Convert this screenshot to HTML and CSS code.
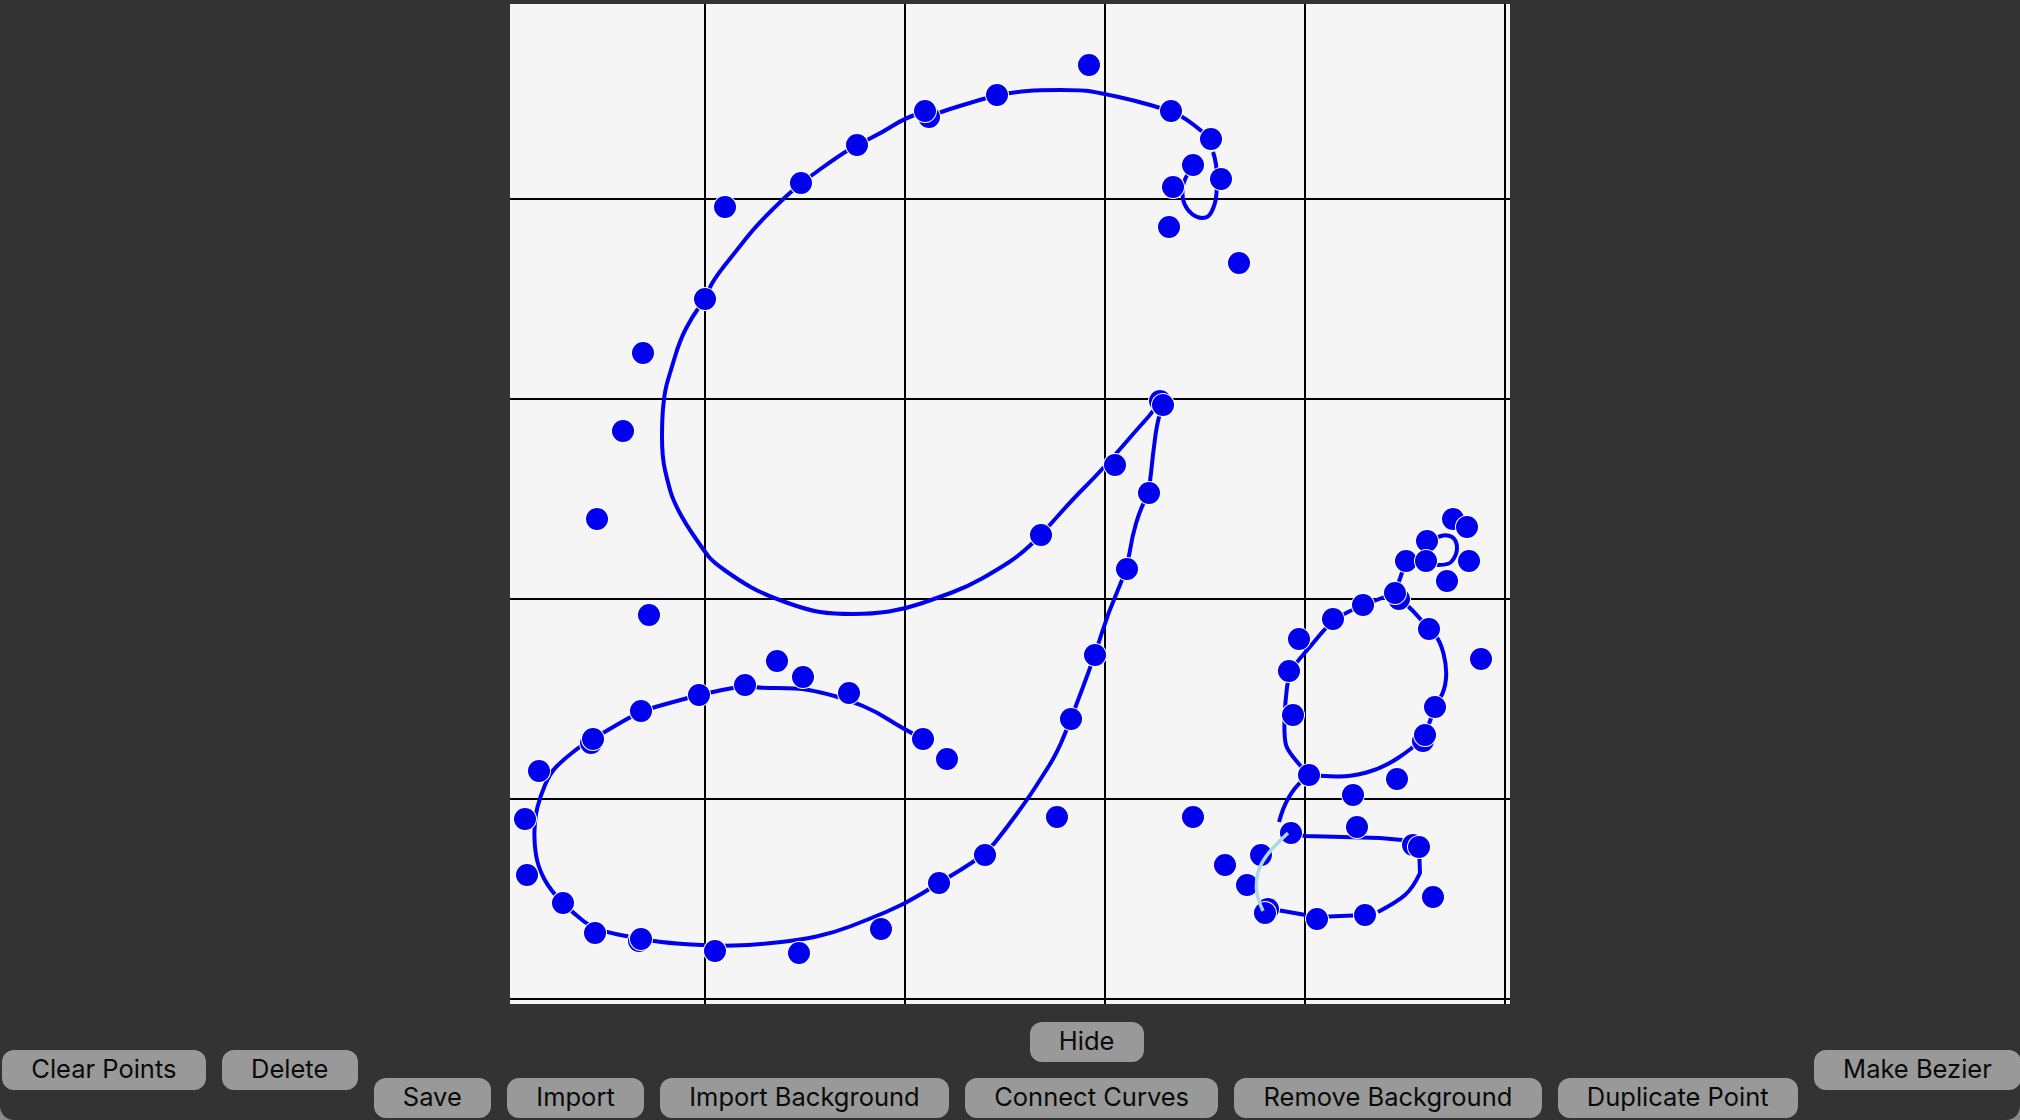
FILE: index.html
```html
<!DOCTYPE html>
<html lang="en">
<head>
  <meta charset="UTF-8" />
  <meta name="viewport" content="width=device-width, initial-scale=1.0"/>
  <title>Curve Editor</title>
  <link rel="stylesheet" href="styles.css">
</head>
<body>
  <div class="app">
    <svg class="board" viewBox="510 4 1000 1000" width="1000" height="1000">
      <rect class="paper" x="510" y="4" width="1000" height="1000"/>

      <!-- grid -->
      <g class="grid">
        <line x1="705" y1="4" x2="705" y2="1004"/>
        <line x1="905" y1="4" x2="905" y2="1004"/>
        <line x1="1105" y1="4" x2="1105" y2="1004"/>
        <line x1="1305" y1="4" x2="1305" y2="1004"/>
        <line x1="1505" y1="4" x2="1505" y2="1004"/>
        <line x1="510" y1="199" x2="1510" y2="199"/>
        <line x1="510" y1="399" x2="1510" y2="399"/>
        <line x1="510" y1="599" x2="1510" y2="599"/>
        <line x1="510" y1="799" x2="1510" y2="799"/>
        <line x1="510" y1="999" x2="1510" y2="999"/>
      </g>

      <!-- curves -->
      <g class="curves">
        <path d="M1160,401 Q1152,413 1146,419.5 Q1140,426 1127.5,440.5 Q1115,455 1105,466 Q1095,477 1083.5,488.5 Q1072,500 1056.5,517.5 Q1041,535 1030.5,545 Q1020,555 1008.5,562.5 Q997,570 982,578.5 Q967,587 952,592.5 Q937,598 921,603.5 Q905,609 889,611.5 Q873,614 853,614 Q833,614 820,612 Q807,610 785,602 Q763,594 751.5,587.5 Q740,581 726.5,571.5 Q713,562 709,557 Q705,552 695,537.5 Q685,523 679,511.5 Q673,500 670.5,491.5 Q668,483 665,470 Q662,457 662,437 Q662,417 663.5,403.5 Q665,390 667.5,381.5 Q670,373 675,356.5 Q680,340 686,328.5 Q692,317 698.5,308 Q705,299 709,289.5 Q713,280 725,265 Q737,250 746,238.5 Q755,227 768.5,213.5 Q782,200 791.5,191.5 Q801,183 820.5,169 Q840,155 848.5,150 Q857,145 870,138.5 Q883,132 894,125 Q905,118 925,111"/>
        <path d="M929,117 Q940,112 956.5,107 Q973,102 985,98.5 Q997,95 1007,93.5 Q1017,92 1027.5,91 Q1038,90 1060.5,90 Q1083,90 1091.5,91.5 Q1100,93 1116.5,96.5 Q1133,100 1152,105.5 Q1171,111 1180.5,116 Q1190,121 1211,139"/>
        <path d="M1213,152 Q1217,163 1217,180 Q1217,197 1214.5,204.5 Q1212,212 1209.5,215 Q1207,218 1202,218 Q1197,218 1192,214 Q1187,210 1184.5,204 Q1182,198 1182.5,189 Q1183,180 1193,165"/>
        <path d="M1163,405 Q1158,417 1155.5,435 Q1153,453 1151,473 Q1149,493 1144.5,501.5 Q1140,510 1136,523.5 Q1132,537 1129.5,553 Q1127,569 1117.5,591 Q1108,613 1101.5,634 Q1095,655 1083,687 Q1071,719 1064,736 Q1057,753 1049.5,765 Q1042,777 1034.5,788.5 Q1027,800 1016,815 Q1005,830 995,842.5 Q985,855 962,869 Q939,883 922,893.5 Q905,904 886,912 Q867,920 850,926.5 Q833,933 816.5,936.5 Q800,940 776.5,942.5 Q753,945 734,945.5 Q715,946 691,944.5 Q667,943 654,941 Q641,939 618,934.5 Q595,930 584,921.5 Q573,913 561.5,901.5 Q550,890 544,878.5 Q538,867 536,855 Q534,843 534.5,830 Q535,817 537.5,807 Q540,797 545,785 Q550,773 556.5,766.5 Q563,760 572.5,752.5 Q582,745 587.5,742 Q593,739 603,733 Q613,727 627,719 Q641,711 657,706.5 Q673,702 686,698.5 Q699,695 722,690 Q745,685 751,686.5 Q757,688 777,688 Q797,688 808.5,690 Q820,692 834.5,696 Q849,700 863,706 Q877,712 888.5,719.5 Q900,727 923,739"/>
        <path d="M1399,599 Q1408,605 1418.5,617 Q1429,629 1434.5,634.5 Q1440,640 1443.5,653.5 Q1447,667 1446,678.5 Q1445,690 1440,698.5 Q1435,707 1430,721 Q1425,735 1419,741.5 Q1413,748 1398,758 Q1383,768 1366.5,772.5 Q1350,777 1336.5,776.5 Q1323,776 1316,775.5 Q1309,775 1302,781 Q1295,787 1289,797 Q1283,807 1279,822"/>
        <path d="M1406,561 L1395,593 Q1363,605 1348,612 Q1333,619 1321.5,633 Q1310,647 1299.5,659 Q1289,671 1287,687 Q1285,703 1284.5,720 Q1284,737 1286,745 Q1288,753 1309,775"/>
        <path d="M1426,564 Q1448,567 1452,561 Q1457,555 1457,548 Q1457,540 1452,537 Q1447,534 1441,536 Q1435,538 1427,541"/>
        <path d="M1291,833 L1305,836 L1380,838 L1413,841 L1419,847 L1420,873 Q1413,888 1405,895 Q1397,902 1378,912"/>
        <path d="M1365,915 L1317,917 L1283,911 L1267,909"/>
      </g>

      <!-- points -->
      <g class="points">
        <circle cx="929" cy="117" r="11"/><circle cx="1160" cy="401" r="11"/><circle cx="591" cy="743" r="11"/>
        <circle cx="639" cy="941" r="11"/><circle cx="1268" cy="909" r="11"/><circle cx="1413" cy="845" r="11"/>
        <circle cx="1423" cy="741" r="11"/><circle cx="1399" cy="599" r="11"/>
        <circle cx="725" cy="207" r="11"/><circle cx="925" cy="111" r="11"/><circle cx="857" cy="145" r="11"/>
        <circle cx="801" cy="183" r="11"/><circle cx="705" cy="299" r="11"/><circle cx="643" cy="353" r="11"/>
        <circle cx="623" cy="431" r="11"/><circle cx="597" cy="519" r="11"/><circle cx="997" cy="95" r="11"/>
        <circle cx="1089" cy="65" r="11"/><circle cx="1171" cy="111" r="11"/><circle cx="1211" cy="139" r="11"/>
        <circle cx="1193" cy="165" r="11"/><circle cx="1173" cy="187" r="11"/><circle cx="1221" cy="179" r="11"/>
        <circle cx="1169" cy="227" r="11"/><circle cx="1239" cy="263" r="11"/><circle cx="1163" cy="405" r="11"/>
        <circle cx="1115" cy="465" r="11"/><circle cx="1149" cy="493" r="11"/><circle cx="649" cy="615" r="11"/>
        <circle cx="777" cy="661" r="11"/><circle cx="803" cy="677" r="11"/><circle cx="745" cy="685" r="11"/>
        <circle cx="699" cy="695" r="11"/><circle cx="849" cy="693" r="11"/><circle cx="641" cy="711" r="11"/>
        <circle cx="593" cy="739" r="11"/><circle cx="923" cy="739" r="11"/><circle cx="947" cy="759" r="11"/>
        <circle cx="539" cy="771" r="11"/><circle cx="525" cy="819" r="11"/><circle cx="527" cy="875" r="11"/>
        <circle cx="563" cy="903" r="11"/><circle cx="595" cy="933" r="11"/><circle cx="641" cy="939" r="11"/>
        <circle cx="715" cy="951" r="11"/><circle cx="799" cy="953" r="11"/><circle cx="881" cy="929" r="11"/>
        <circle cx="939" cy="883" r="11"/><circle cx="985" cy="855" r="11"/><circle cx="1041" cy="535" r="11"/>
        <circle cx="1127" cy="569" r="11"/><circle cx="1095" cy="655" r="11"/><circle cx="1071" cy="719" r="11"/>
        <circle cx="1057" cy="817" r="11"/><circle cx="1193" cy="817" r="11"/><circle cx="1225" cy="865" r="11"/>
        <circle cx="1247" cy="885" r="11"/><circle cx="1261" cy="855" r="11"/><circle cx="1291" cy="833" r="11"/>
        <circle cx="1265" cy="913" r="11"/><circle cx="1317" cy="919" r="11"/><circle cx="1365" cy="915" r="11"/>
        <circle cx="1433" cy="897" r="11"/><circle cx="1419" cy="847" r="11"/><circle cx="1357" cy="827" r="11"/>
        <circle cx="1353" cy="795" r="11"/><circle cx="1397" cy="779" r="11"/><circle cx="1309" cy="775" r="11"/>
        <circle cx="1425" cy="735" r="11"/><circle cx="1435" cy="707" r="11"/><circle cx="1293" cy="715" r="11"/>
        <circle cx="1289" cy="671" r="11"/><circle cx="1299" cy="639" r="11"/><circle cx="1333" cy="619" r="11"/>
        <circle cx="1363" cy="605" r="11"/><circle cx="1395" cy="593" r="11"/><circle cx="1429" cy="629" r="11"/>
        <circle cx="1481" cy="659" r="11"/><circle cx="1447" cy="581" r="11"/><circle cx="1406" cy="561" r="11"/>
        <circle cx="1427" cy="541" r="11"/><circle cx="1426" cy="561" r="11"/><circle cx="1453" cy="519" r="11"/>
        <circle cx="1467" cy="527" r="11"/><circle cx="1469" cy="561" r="11"/>
      </g>

      <!-- selected curve -->
      <path class="selected" d="M1288,833 Q1272,848 1266,856.5 Q1260,865 1258,872.5 Q1256,880 1256.5,889 Q1257,898 1263,911"/>
    </svg>

    <div class="toolbar">
      <div class="group side">
        <button>Clear Points</button>
        <button>Delete</button>
      </div>
      <div class="middle">
        <button class="hide">Hide</button>
        <div class="group">
          <button>Save</button>
          <button>Import</button>
          <button>Import Background</button>
          <button>Connect Curves</button>
          <button>Remove Background</button>
          <button>Duplicate Point</button>
        </div>
      </div>
      <div class="group side">
        <button>Make Bezier</button>
      </div>
    </div>
  </div>
</body>
</html>
```

FILE: styles.css
```css
html, body {
  margin: 0;
  height: 100%;
  background: #8a8a8a;
}
.app {
  height: 1120px;
  overflow: hidden;
  background: #333;
  border-radius: 0 0 14px 14px;
  padding-top: 4px;
  box-sizing: border-box;
}
.board {
  display: block;
  margin: 0 auto;
}
.paper {
  fill: #f5f5f5;
}
.grid line {
  stroke: #000;
  stroke-width: 2;
}
.curves path {
  fill: none;
  stroke: #0000ee;
  stroke-width: 4;
  stroke-linejoin: round;
}
.points circle {
  fill: #0000ee;
  stroke: #fff;
  stroke-width: 2;
  paint-order: stroke;
}
.selected {
  fill: none;
  stroke: #add8e6;
  stroke-width: 3.5;
  stroke-linejoin: round;
}
.toolbar {
  display: flex;
  gap: 16px;
  margin-top: 18px;
  padding-left: 2px;
}
.group {
  display: flex;
  gap: 16px;
}
.side {
  margin-top: 28px;
}
.middle {
  display: flex;
  flex-direction: column;
  gap: 16px;
}
.hide {
  align-self: flex-start;
  margin-left: 656px;
}
button {
  height: 40px;
  padding: 0 29.25px 4px;
  font-family: Inter, "Liberation Sans", sans-serif;
  font-size: 25.5px;
  color: #0a0a0a;
  background: #999;
  border: none;
  border-radius: 12px;
  white-space: nowrap;
}
```
